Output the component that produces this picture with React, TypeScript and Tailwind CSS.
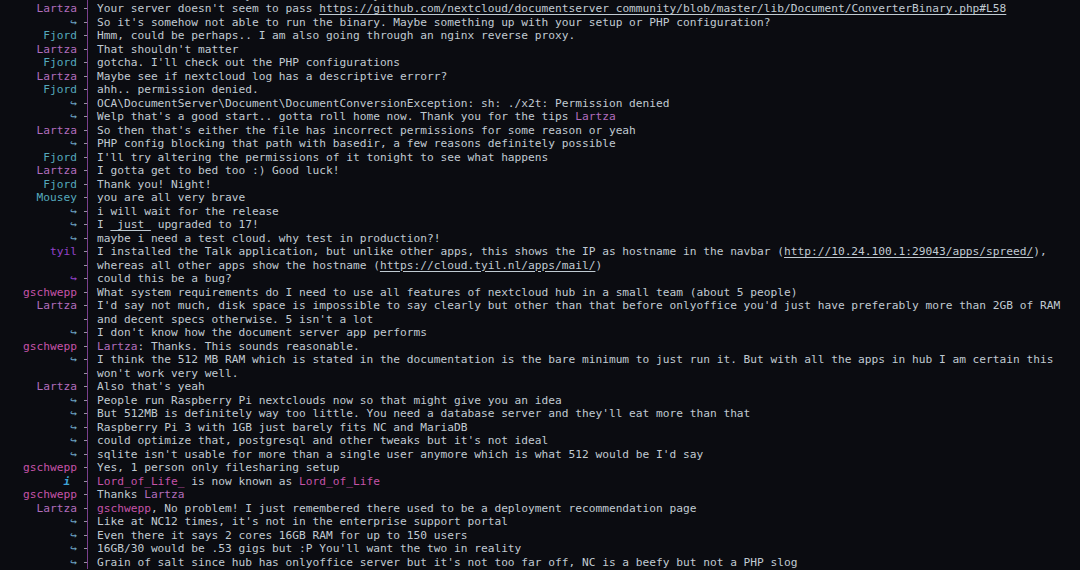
import React from "react";

type Seg = string | { t: string; c?: string; u?: boolean };
type Row = { nick?: string; nc?: string; kind?: "arrow" | "info"; ac?: string; parts: Seg[] };

const LARTZA = "text-[#b16cbc]";
const FJORD = "text-[#55a9bd]";
const MOUSEY = "text-[#55a9bd]";
const TYIL = "text-[#9343c9]";
const GSCH = "text-[#c553a8]";

const rows: Row[] = [
  { kind: "arrow", parts: ["Check if the x2t binary can be executed by the webserver user, it should be"] },
  {
    nick: "Lartza",
    nc: LARTZA,
    parts: [
      "Your server doesn't seem to pass ",
      { t: "https://github.com/nextcloud/documentserver_community/blob/master/lib/Document/ConverterBinary.php#L58", u: true },
    ],
  },
  { kind: "arrow", parts: ["So it's somehow not able to run the binary. Maybe something up with your setup or PHP configuration?"] },
  { nick: "Fjord", nc: FJORD, parts: ["Hmm, could be perhaps.. I am also going through an nginx reverse proxy."] },
  { nick: "Lartza", nc: LARTZA, parts: ["That shouldn't matter"] },
  { nick: "Fjord", nc: FJORD, parts: ["gotcha. I'll check out the PHP configurations"] },
  { nick: "Lartza", nc: LARTZA, parts: ["Maybe see if nextcloud log has a descriptive errorr?"] },
  { nick: "Fjord", nc: FJORD, parts: ["ahh.. permission denied."] },
  { kind: "arrow", parts: ["OCA\\DocumentServer\\Document\\DocumentConversionException: sh: ./x2t: Permission denied"] },
  { kind: "arrow", parts: ["Welp that's a good start.. gotta roll home now. Thank you for the tips ", { t: "Lartza", c: LARTZA }] },
  { nick: "Lartza", nc: LARTZA, parts: ["So then that's either the file has incorrect permissions for some reason or yeah"] },
  { kind: "arrow", parts: ["PHP config blocking that path with basedir, a few reasons definitely possible"] },
  { nick: "Fjord", nc: FJORD, parts: ["I'll try altering the permissions of it tonight to see what happens"] },
  { nick: "Lartza", nc: LARTZA, parts: ["I gotta get to bed too :) Good luck!"] },
  { nick: "Fjord", nc: FJORD, parts: ["Thank you! Night!"] },
  { nick: "Mousey", nc: MOUSEY, parts: ["you are all very brave"] },
  { kind: "arrow", parts: ["i will wait for the release"] },
  { kind: "arrow", parts: ["I ", { t: "_just_", u: true }, " upgraded to 17!"] },
  { kind: "arrow", parts: ["maybe i need a test cloud. why test in production?!"] },
  {
    nick: "tyil",
    nc: TYIL,
    parts: [
      "I installed the Talk application, but unlike other apps, this shows the IP as hostname in the navbar (",
      { t: "http://10.24.100.1:29043/apps/spreed/", u: true },
      "),",
    ],
  },
  { parts: ["whereas all other apps show the hostname (", { t: "https://cloud.tyil.nl/apps/mail/", u: true }, ")"] },
  { kind: "arrow", ac: TYIL, parts: ["could this be a bug?"] },
  { nick: "gschwepp", nc: GSCH, parts: ["What system requirements do I need to use all features of nextcloud hub in a small team (about 5 people)"] },
  {
    nick: "Lartza",
    nc: LARTZA,
    parts: ["I'd say not much, disk space is impossible to say clearly but other than that before onlyoffice you'd just have preferably more than 2GB of RAM"],
  },
  { parts: ["and decent specs otherwise. 5 isn't a lot"] },
  { kind: "arrow", parts: ["I don't know how the document server app performs"] },
  { nick: "gschwepp", nc: GSCH, parts: [{ t: "Lartza", c: LARTZA }, ": Thanks. This sounds reasonable."] },
  {
    kind: "arrow",
    parts: ["I think the 512 MB RAM which is stated in the documentation is the bare minimum to just run it. But with all the apps in hub I am certain this"],
  },
  { parts: ["won't work very well."] },
  { nick: "Lartza", nc: LARTZA, parts: ["Also that's yeah"] },
  { kind: "arrow", parts: ["People run Raspberry Pi nextclouds now so that might give you an idea"] },
  { kind: "arrow", parts: ["But 512MB is definitely way too little. You need a database server and they'll eat more than that"] },
  { kind: "arrow", parts: ["Raspberry Pi 3 with 1GB just barely fits NC and MariaDB"] },
  { kind: "arrow", parts: ["could optimize that, postgresql and other tweaks but it's not ideal"] },
  { kind: "arrow", parts: ["sqlite isn't usable for more than a single user anymore which is what 512 would be I'd say"] },
  { nick: "gschwepp", nc: GSCH, parts: ["Yes, 1 person only filesharing setup"] },
  { kind: "info", parts: [{ t: "Lord_of_Life_", c: GSCH }, " is now known as ", { t: "Lord_of_Life", c: GSCH }] },
  { nick: "gschwepp", nc: GSCH, parts: ["Thanks ", { t: "Lartza", c: LARTZA }] },
  {
    nick: "Lartza",
    nc: LARTZA,
    parts: [{ t: "gschwepp", c: GSCH }, ", No problem! I just remembered there used to be a deployment recommendation page"],
  },
  { kind: "arrow", parts: ["Like at NC12 times, it's not in the enterprise support portal"] },
  { kind: "arrow", parts: ["Even there it says 2 cores 16GB RAM for up to 150 users"] },
  { kind: "arrow", parts: ["16GB/30 would be .53 gigs but :P You'll want the two in reality"] },
  { kind: "arrow", parts: ["Grain of salt since hub has onlyoffice server but it's not too far off, NC is a beefy but not a PHP slog"] },
];

function Prefix({ row }: { row: Row }) {
  if (row.kind === "arrow") {
    return <span className={row.ac ?? "text-[#6fa6c4]"}>↪</span>;
  }
  if (row.kind === "info") {
    return <span className="text-[#3ea3d6] italic font-bold pr-[6.7px]">i</span>;
  }
  return <span className={row.nc}>{row.nick ?? ""}</span>;
}

function Line({ row }: { row: Row }) {
  return (
    <div className="flex h-[13.5px] leading-[13.5px] pl-[3px]">
      <div className="w-[74px] shrink-0 text-right whitespace-pre">
        <Prefix row={row} />
      </div>
      <div className="w-[10px] shrink-0 flex items-center justify-end">
        <span className="w-[3px] h-px bg-[#9a8fa6]" />
      </div>
      <div className="w-px shrink-0 bg-[#7a3f8c]" />
      <div className="w-[9px] shrink-0" />
      <div className="whitespace-pre text-[#c0cad2]">
        {row.parts.map((p, i) =>
          typeof p === "string" ? (
            <span key={i}>{p}</span>
          ) : (
            <span key={i} className={(p.c ?? "") + (p.u ? " underline underline-offset-2" : "")}>
              {p.t}
            </span>
          )
        )}
      </div>
    </div>
  );
}

export default function App() {
  return (
    <div className="w-[1080px] h-[570px] overflow-hidden bg-[#0b0c11] font-['DejaVu_Sans_Mono',monospace] text-[11.2px]">
      <div className="-mt-[11.5px]">
        {rows.map((r, i) => (
          <Line key={i} row={r} />
        ))}
      </div>
    </div>
  );
}
